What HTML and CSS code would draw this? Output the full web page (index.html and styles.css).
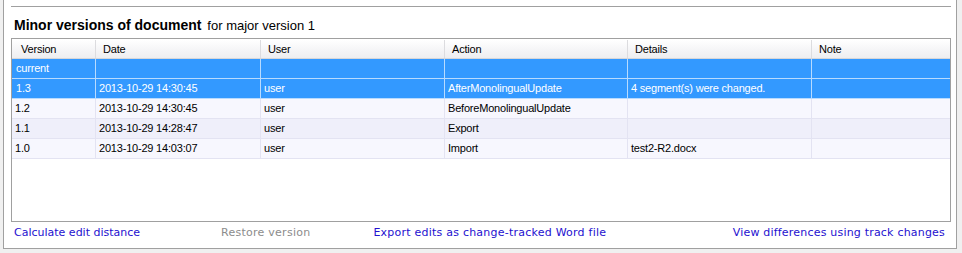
FILE: index.html
```html
<!DOCTYPE html>
<html>
  <head>
    <meta charset="UTF-8">
    <link rel="stylesheet" href="styles.css">
  </head>
  <body>
    <div class="panel">
      <div class="rule"></div>
      <div class="title"><b>Minor versions of document</b> <span class="sub">for major version 1</span></div>

      <div class="grid">
        <div class="row head">
          <div class="cell">Version</div>
          <div class="cell">Date</div>
          <div class="cell">User</div>
          <div class="cell">Action</div>
          <div class="cell">Details</div>
          <div class="cell">Note</div>
        </div>
        <div class="row sel">
          <div class="cell">current</div>
          <div class="cell"></div>
          <div class="cell"></div>
          <div class="cell"></div>
          <div class="cell"></div>
          <div class="cell"></div>
        </div>
        <div class="row sel">
          <div class="cell">1.3</div>
          <div class="cell">2013-10-29 14:30:45</div>
          <div class="cell">user</div>
          <div class="cell">AfterMonolingualUpdate</div>
          <div class="cell">4 segment(s) were changed.</div>
          <div class="cell"></div>
        </div>
        <div class="row">
          <div class="cell">1.2</div>
          <div class="cell">2013-10-29 14:30:45</div>
          <div class="cell">user</div>
          <div class="cell">BeforeMonolingualUpdate</div>
          <div class="cell"></div>
          <div class="cell"></div>
        </div>
        <div class="row alt">
          <div class="cell">1.1</div>
          <div class="cell">2013-10-29 14:28:47</div>
          <div class="cell">user</div>
          <div class="cell">Export</div>
          <div class="cell"></div>
          <div class="cell"></div>
        </div>
        <div class="row">
          <div class="cell">1.0</div>
          <div class="cell">2013-10-29 14:03:07</div>
          <div class="cell">user</div>
          <div class="cell">Import</div>
          <div class="cell">test2-R2.docx</div>
          <div class="cell"></div>
        </div>
      </div>

      <div class="links">
        <a class="link calc" href="#">Calculate edit distance</a>
        <span class="link off restore">Restore version</span>
        <a class="link export" href="#">Export edits as change-tracked Word file</a>
        <a class="link view" href="#">View differences using track changes</a>
      </div>
    </div>
  </body>
</html>
```

FILE: styles.css
```css
html {
  margin: 0;
}
body {
  margin: 0;
  background-color: #f0f0f0;
  font-family: "Liberation Sans", Arial, sans-serif;
}
.panel {
  box-sizing: border-box;
  width: 954px;
  height: 249px;
  margin-left: 3px;
  padding: 6px 5px 0 7px;
  background: white;
  border: 1px solid #a0a0a0;
  border-top: none;
}
.rule {
  height: 1px;
  background: #a0a0a0;
}
.title {
  margin-top: 10px;
  padding-left: 3px;
  height: 16px;
  line-height: 16px;
  font-size: 14px;
  color: #000;
}
.title .sub {
  font-size: 13px;
  margin-left: 2px;
}

/* version list */
.grid {
  box-sizing: border-box;
  height: 184px;
  margin-top: 5px;
  border: 1px solid #a0a0a0;
  background: white;
  font-size: 11px;
  letter-spacing: -0.2px;
}
.row {
  display: grid;
  grid-template-columns: 84px 165px 184px 183px 184px 138px;
  box-sizing: border-box;
  height: 20px;
  line-height: 19px;
  border-bottom: 1px solid #e3e3f2;
  background: #f7f7fe;
  color: #000;
}
.row.alt {
  background: #efeffa;
}
.cell {
  box-sizing: border-box;
  padding-left: 3px;
  border-right: 1px solid #e3e3f2;
  white-space: nowrap;
  overflow: hidden;
}
.cell:last-child {
  border-right: none;
}
.row.sel {
  background: #3399ff;
  color: white;
  border-bottom-color: #b8dbff;
}
.row.sel .cell {
  border-right-color: #b8dbff;
}
.row.sel .cell:first-child {
  padding-left: 4px;
}
.row.head {
  background: linear-gradient(#ffffff, #f4f4f6 60%, #eeeef0);
  border-bottom: 1px solid #d6d6d9;
  border-top: 1px solid #ffffff;
  line-height: 18px;
}
.row.head .cell {
  padding-left: 7px;
  border-right: 1px solid #dcdcdf;
}
.row.head .cell:first-child {
  padding-left: 9px;
}
.row.head .cell:last-child {
  border-right: none;
}

/* commands */
.links {
  display: flex;
  margin-top: 4px;
  padding: 0 6px 0 3px;
  font-family: "DejaVu Sans", Verdana, sans-serif;
  font-size: 11px;
  line-height: 13px;
}
.link {
  color: #2410d0;
  text-decoration: none;
}
.link.off {
  color: #8c8c8c;
}
.restore {
  margin-left: 81px;
  letter-spacing: 0.25px;
}
.export {
  margin-left: 63px;
  letter-spacing: 0.23px;
}
.view {
  margin-left: auto;
  letter-spacing: 0.2px;
}
```
